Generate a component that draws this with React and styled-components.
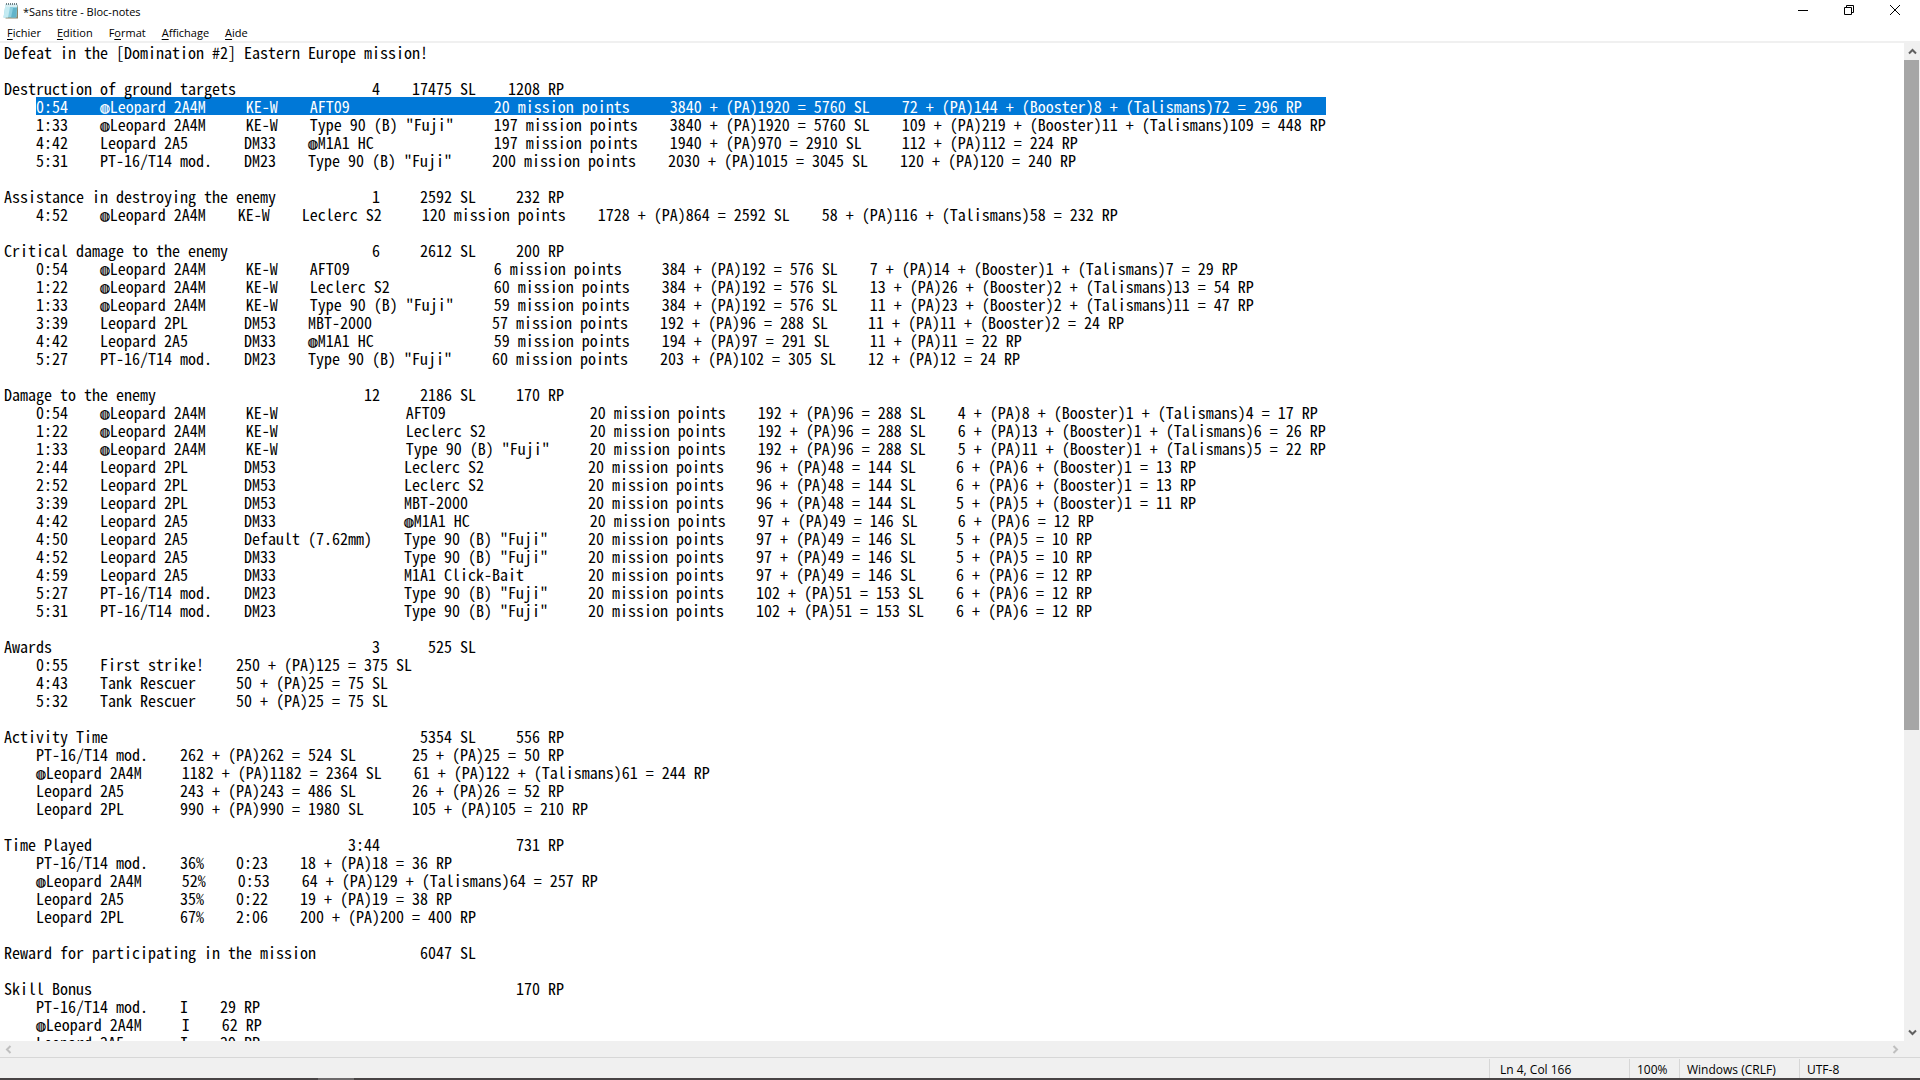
import { useEffect, useRef } from "react";
import styled, { createGlobalStyle } from "styled-components";

const sections = [
  {
    title: "Destruction of ground targets",
    totals: ["4", "17475 SL", "1208 RP"],
    widths: [4, 14, 4, 19, 18, 25, 53],
    rows: [
      ["0:54", "◍Leopard 2A4M", "KE-W", "AFT09", "20 mission points", "3840 + (PA)1920 = 5760 SL", "72 + (PA)144 + (Booster)8 + (Talismans)72 = 296 RP"],
      ["1:33", "◍Leopard 2A4M", "KE-W", 'Type 90 (B) "Fuji"', "197 mission points", "3840 + (PA)1920 = 5760 SL", "109 + (PA)219 + (Booster)11 + (Talismans)109 = 448 RP"],
      ["4:42", "Leopard 2A5", "DM33", "◍M1A1 HC", "197 mission points", "1940 + (PA)970 = 2910 SL", "112 + (PA)112 = 224 RP"],
      ["5:31", "PT-16/T14 mod.", "DM23", 'Type 90 (B) "Fuji"', "200 mission points", "2030 + (PA)1015 = 3045 SL", "120 + (PA)120 = 240 RP"],
    ],
  },
  {
    title: "Assistance in destroying the enemy",
    totals: ["1", "2592 SL", "232 RP"],
    widths: [4, 13, 4, 11, 18, 24, 37],
    rows: [
      ["4:52", "◍Leopard 2A4M", "KE-W", "Leclerc S2", "120 mission points", "1728 + (PA)864 = 2592 SL", "58 + (PA)116 + (Talismans)58 = 232 RP"],
    ],
  },
  {
    title: "Critical damage to the enemy",
    totals: ["6", "2612 SL", "200 RP"],
    widths: [4, 14, 4, 19, 17, 22, 48],
    rows: [
      ["0:54", "◍Leopard 2A4M", "KE-W", "AFT09", "6 mission points", "384 + (PA)192 = 576 SL", "7 + (PA)14 + (Booster)1 + (Talismans)7 = 29 RP"],
      ["1:22", "◍Leopard 2A4M", "KE-W", "Leclerc S2", "60 mission points", "384 + (PA)192 = 576 SL", "13 + (PA)26 + (Booster)2 + (Talismans)13 = 54 RP"],
      ["1:33", "◍Leopard 2A4M", "KE-W", 'Type 90 (B) "Fuji"', "59 mission points", "384 + (PA)192 = 576 SL", "11 + (PA)23 + (Booster)2 + (Talismans)11 = 47 RP"],
      ["3:39", "Leopard 2PL", "DM53", "MBT-2000", "57 mission points", "192 + (PA)96 = 288 SL", "11 + (PA)11 + (Booster)2 = 24 RP"],
      ["4:42", "Leopard 2A5", "DM33", "◍M1A1 HC", "59 mission points", "194 + (PA)97 = 291 SL", "11 + (PA)11 = 22 RP"],
      ["5:27", "PT-16/T14 mod.", "DM23", 'Type 90 (B) "Fuji"', "60 mission points", "203 + (PA)102 = 305 SL", "12 + (PA)12 = 24 RP"],
    ],
  },
  {
    title: "Damage to the enemy",
    totals: ["12", "2186 SL", "170 RP"],
    widths: [4, 14, 16, 19, 17, 21, 46],
    rows: [
      ["0:54", "◍Leopard 2A4M", "KE-W", "AFT09", "20 mission points", "192 + (PA)96 = 288 SL", "4 + (PA)8 + (Booster)1 + (Talismans)4 = 17 RP"],
      ["1:22", "◍Leopard 2A4M", "KE-W", "Leclerc S2", "20 mission points", "192 + (PA)96 = 288 SL", "6 + (PA)13 + (Booster)1 + (Talismans)6 = 26 RP"],
      ["1:33", "◍Leopard 2A4M", "KE-W", 'Type 90 (B) "Fuji"', "20 mission points", "192 + (PA)96 = 288 SL", "5 + (PA)11 + (Booster)1 + (Talismans)5 = 22 RP"],
      ["2:44", "Leopard 2PL", "DM53", "Leclerc S2", "20 mission points", "96 + (PA)48 = 144 SL", "6 + (PA)6 + (Booster)1 = 13 RP"],
      ["2:52", "Leopard 2PL", "DM53", "Leclerc S2", "20 mission points", "96 + (PA)48 = 144 SL", "6 + (PA)6 + (Booster)1 = 13 RP"],
      ["3:39", "Leopard 2PL", "DM53", "MBT-2000", "20 mission points", "96 + (PA)48 = 144 SL", "5 + (PA)5 + (Booster)1 = 11 RP"],
      ["4:42", "Leopard 2A5", "DM33", "◍M1A1 HC", "20 mission points", "97 + (PA)49 = 146 SL", "6 + (PA)6 = 12 RP"],
      ["4:50", "Leopard 2A5", "Default (7.62mm)", 'Type 90 (B) "Fuji"', "20 mission points", "97 + (PA)49 = 146 SL", "5 + (PA)5 = 10 RP"],
      ["4:52", "Leopard 2A5", "DM33", 'Type 90 (B) "Fuji"', "20 mission points", "97 + (PA)49 = 146 SL", "5 + (PA)5 = 10 RP"],
      ["4:59", "Leopard 2A5", "DM33", "M1A1 Click-Bait", "20 mission points", "97 + (PA)49 = 146 SL", "6 + (PA)6 = 12 RP"],
      ["5:27", "PT-16/T14 mod.", "DM23", 'Type 90 (B) "Fuji"', "20 mission points", "102 + (PA)51 = 153 SL", "6 + (PA)6 = 12 RP"],
      ["5:31", "PT-16/T14 mod.", "DM23", 'Type 90 (B) "Fuji"', "20 mission points", "102 + (PA)51 = 153 SL", "6 + (PA)6 = 12 RP"],
    ],
  },
  {
    title: "Awards",
    totals: ["3", "525 SL", ""],
    widths: [4, 13, 22],
    rows: [
      ["0:55", "First strike!", "250 + (PA)125 = 375 SL"],
      ["4:43", "Tank Rescuer", "50 + (PA)25 = 75 SL"],
      ["5:32", "Tank Rescuer", "50 + (PA)25 = 75 SL"],
    ],
  },
  {
    title: "Activity Time",
    totals: ["", "5354 SL", "556 RP"],
    widths: [14, 25, 37],
    rows: [
      ["PT-16/T14 mod.", "262 + (PA)262 = 524 SL", "25 + (PA)25 = 50 RP"],
      ["◍Leopard 2A4M", "1182 + (PA)1182 = 2364 SL", "61 + (PA)122 + (Talismans)61 = 244 RP"],
      ["Leopard 2A5", "243 + (PA)243 = 486 SL", "26 + (PA)26 = 52 RP"],
      ["Leopard 2PL", "990 + (PA)990 = 1980 SL", "105 + (PA)105 = 210 RP"],
    ],
  },
  {
    title: "Time Played",
    totals: ["3:44", "", "731 RP"],
    widths: [14, 3, 4, 37],
    rows: [
      ["PT-16/T14 mod.", "36%", "0:23", "18 + (PA)18 = 36 RP"],
      ["◍Leopard 2A4M", "52%", "0:53", "64 + (PA)129 + (Talismans)64 = 257 RP"],
      ["Leopard 2A5", "35%", "0:22", "19 + (PA)19 = 38 RP"],
      ["Leopard 2PL", "67%", "2:06", "200 + (PA)200 = 400 RP"],
    ],
  },
  {
    title: "Reward for participating in the mission",
    totals: ["", "6047 SL", ""],
    widths: [],
    rows: [],
  },
  {
    title: "Skill Bonus",
    totals: ["", "", "170 RP"],
    widths: [14, 1, 5],
    rows: [
      ["PT-16/T14 mod.", "I", "29 RP"],
      ["◍Leopard 2A4M", "I", "62 RP"],
      ["Leopard 2A5", "I", "29 RP"],
    ],
  },
];

const GAP = "    ";

function formatSection({ title, totals, widths, rows }) {
  const [count, sl, rp] = totals;
  const head =
    title.padEnd(40) + count.padStart(7) + sl.padStart(12) + rp.padStart(11);
  const body = rows.map(
    (row) => GAP + row.map((cell, i) => cell.padEnd(widths[i])).join(GAP)
  );
  return [head.trimEnd(), ...body].join("\n");
}

const report = [
  "Defeat in the [Domination #2] Eastern Europe mission!",
  ...sections.map(formatSection),
].join("\n\n");

const menus = ["Fichier", "Edition", "Format", "Affichage", "Aide"];

export default function App() {
  const editor = useRef(null);

  useEffect(() => {
    const start = report.indexOf("0:54");
    editor.current.focus({ preventScroll: true });
    editor.current.setSelectionRange(start, report.indexOf("\n", start));
    editor.current.scrollTop = 0;
    editor.current.scrollLeft = 0;
  }, []);

  return (
    <Window>
      <GlobalStyle />
      <TitleBar>
        <NotepadIcon />
        <Title>*Sans titre - Bloc-notes</Title>
        <Caption aria-label="Réduire">
          <svg width="10" height="10" viewBox="0 0 10 10">
            <path d="M0 5.5h10" />
          </svg>
        </Caption>
        <Caption aria-label="Niveau inférieur">
          <svg width="10" height="10" viewBox="0 0 10 10">
            <path d="M.5 2.5h7v7h-7zM2.5 2.5v-2h7v7h-2" />
          </svg>
        </Caption>
        <Caption aria-label="Fermer">
          <svg width="10" height="10" viewBox="0 0 10 10">
            <path d="M0 0l10 10M10 0L0 10" />
          </svg>
        </Caption>
      </TitleBar>

      <MenuBar>
        {menus.map((name) => {
          const key = name === "Format" ? 1 : 0;
          return (
            <MenuButton key={name}>
              {name.slice(0, key)}
              <u>{name[key]}</u>
              {name.slice(key + 1)}
            </MenuButton>
          );
        })}
      </MenuBar>

      <Workspace>
        <Editor
          ref={editor}
          aria-label="Éditeur de texte"
          wrap="off"
          spellCheck={false}
          defaultValue={report}
        />
        <VerticalBar>
          <ArrowButton aria-label="Haut">
            <Chevron d="M1 6.5L4.5 3L8 6.5" />
          </ArrowButton>
          <Track>
            <Thumb />
          </Track>
          <ArrowButton aria-label="Bas">
            <Chevron d="M1 2.5L4.5 6L8 2.5" />
          </ArrowButton>
        </VerticalBar>
      </Workspace>

      <HorizontalBar>
        <ArrowButton aria-label="Gauche" disabled>
          <Chevron d="M6.5 1L3 4.5L6.5 8" />
        </ArrowButton>
        <ArrowButton aria-label="Droite" disabled>
          <Chevron d="M2.5 1L6 4.5L2.5 8" />
        </ArrowButton>
      </HorizontalBar>

      <StatusBar>
        <Status $width={140}>Ln 4, Col 166</Status>
        <Status $width={50} $tight>100%</Status>
        <Status $width={120} $tight>Windows (CRLF)</Status>
        <Status $width={120} $tight>UTF-8</Status>
      </StatusBar>

      <Taskbar>
        <TaskbarItem />
      </Taskbar>
    </Window>
  );
}

function Chevron({ d }) {
  return (
    <svg width="9" height="9" viewBox="0 0 9 9" fill="none">
      <path d={d} stroke="currentColor" strokeWidth="2" />
    </svg>
  );
}

function NotepadIcon() {
  return (
    <svg width="16" height="17" viewBox="0 0 16 17">
      <path d="M4 3h11v13.500H2.500z" fill="#8d8468" />
      <path d="M2.500 2.500h12L13.500 15.500H.5z" fill="#8fd0e0" />
      <path d="M2.500 2.500h5L5 15.500H.5z" fill="#c4ebf2" />
      <path d="M10 6h4l-1 9.500H8z" fill="#63b4c9" />
      <path d="M2.500 2.500h12l-.3 2.500H2.200z" fill="#d9eef2" />
      <path d="M3.500 1v2M5.500 1v2M7.500 1v2M9.500 1v2M11.500 1v2M13.500 1v2" stroke="#6f7f84" />
    </svg>
  );
}

const GlobalStyle = createGlobalStyle`
  * {
    box-sizing: border-box;
  }
  body {
    margin: 0;
    background: #ffffff;
  }
  button {
    margin: 0;
    padding: 0;
    border: none;
    background: transparent;
    font: inherit;
    color: inherit;
  }
`;

const Window = styled.main`
  display: flex;
  flex-direction: column;
  height: 100vh;
  background: #ffffff;
  color: #000000;
  font-family: "Open Sans", "Noto Sans", sans-serif;
  font-size: 12px;
  line-height: 16px;
`;

const TitleBar = styled.header`
  display: flex;
  align-items: flex-start;
  height: 24px;
  padding: 0 2px 0 3px;

  > svg {
    margin-top: 2px;
  }
`;

const Title = styled.h1`
  flex: 1;
  margin: 0;
  padding: 4px 0 0 4px;
  font-size: 11px;
  font-weight: 400;
`;

const Caption = styled.button`
  display: flex;
  align-items: center;
  justify-content: center;
  width: 46px;
  height: 20px;

  svg {
    fill: none;
    stroke: #000000;
  }
`;

const MenuBar = styled.nav`
  display: flex;
  gap: 2px;
  height: 19px;
  border-bottom: 2px solid #f0f0f0;
`;

const MenuButton = styled.button`
  padding: 0 7px;
  font-size: 11px;
  text-underline-offset: 2px;
`;

const Workspace = styled.section`
  display: flex;
  flex: 1;
  min-height: 0;
`;

// The selected line gets its band from the background, one line (18px) high:
// the native highlight is as tall as the font box and covers the line above.
const Editor = styled.textarea`
  flex: 1;
  min-width: 0;
  margin: 0;
  padding: 0 4px;
  border: none;
  outline: none;
  resize: none;
  overflow: hidden;
  white-space: pre;
  background: #ffffff linear-gradient(#0078d7, #0078d7) no-repeat 36px 54px /
    1290px 18px local;
  color: #000000;
  font-family: "Noto Sans Mono CJK JP", "DejaVu Sans Mono", monospace;
  font-size: 16px;
  line-height: 18px;

  &::selection {
    background: transparent;
    color: #ffffff;
  }
`;

const VerticalBar = styled.div`
  display: flex;
  flex-direction: column;
  width: 16px;
  background: #f0f0f0;
`;

const Track = styled.div`
  flex: 1;
  padding-right: 1px;
`;

const Thumb = styled.div`
  height: 69.5%;
  background: #a6a6a6;
`;

const ArrowButton = styled.button`
  display: flex;
  align-items: center;
  justify-content: center;
  width: 16px;
  height: 17px;
  color: #606060;

  &:disabled {
    color: #bfbfbf;
  }
`;

const HorizontalBar = styled.div`
  display: flex;
  justify-content: space-between;
  height: 16px;
  padding-right: 17px;
  background: #f0f0f0;
`;

const StatusBar = styled.footer`
  display: flex;
  justify-content: flex-end;
  height: 21px;
  padding-top: 1px;
  padding-right: 1px;
  border-top: 1px solid #d7d7d7;
  background: #f0f0f0;
`;

const Status = styled.span`
  width: ${({ $width }) => $width}px;
  padding: 3px 0 0 ${({ $tight }) => ($tight ? 7 : 10)}px;
  border-left: 1px solid #d7d7d7;
  font-size: 12px;
  white-space: nowrap;
`;

const Taskbar = styled.div`
  height: 2px;
  padding-left: 318px;
  background: #484445;
`;

const TaskbarItem = styled.div`
  width: 36px;
  height: 2px;
  background: #6d6a6b;
`;
